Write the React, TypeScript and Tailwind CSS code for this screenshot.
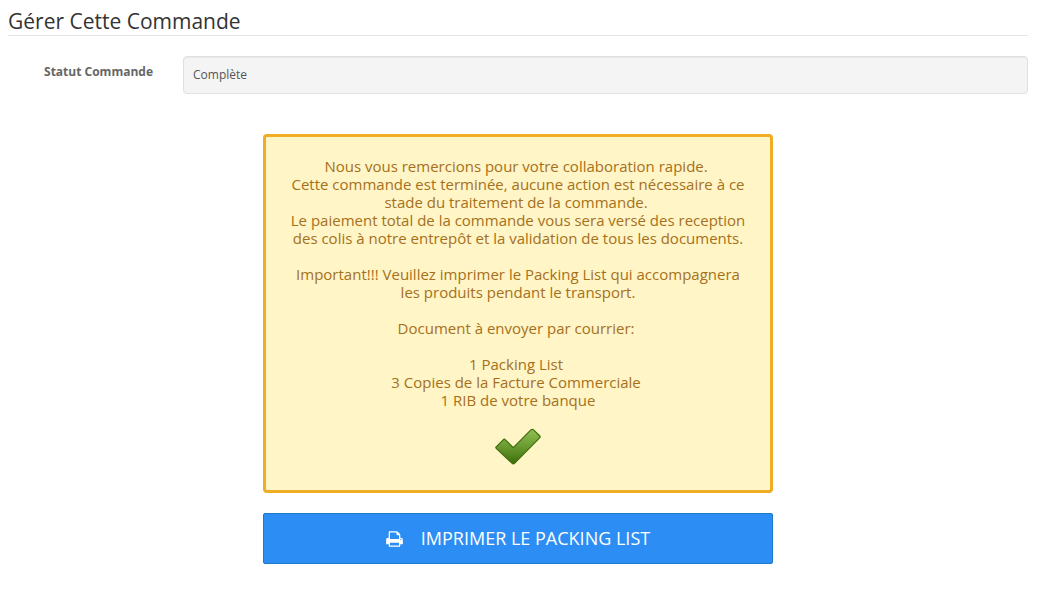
function PrintIcon() {
  return (
    <svg aria-hidden="true" viewBox="0 0 1664 1792" className="h-[18px] w-[17px] fill-current">
      <path d="M384 1536h896v-256h-896v256zM384 896h896v-384h-160q-40 0-68-28t-28-68v-160h-640v640zM1536 960q0-26-19-45t-45-19-45 19-19 45 19 45 45 19 45-19 19-45zM1664 960v416q0 13-9.500 22.500t-22.500 9.500h-224v160q0 40-28 68t-68 28h-960q-40 0-68-28t-28-68v-160h-224q-13 0-22.500-9.500t-9.500-22.500v-416q0-79 56.500-135.500t135.500-56.500h64v-544q0-40 28-68t68-28h672q40 0 88 20t76 48l152 152q28 28 48 76t20 88v256h64q79 0 135.500 56.500t56.500 135.500z" />
    </svg>
  );
}

function CheckMark() {
  return (
    <svg aria-hidden="true" viewBox="0 0 48 38" className="h-[38px] w-12">
      <defs>
        <linearGradient id="check-fill" x1="0" y1="0" x2="0" y2="1">
          <stop offset="0" stopColor="#8fc054" />
          <stop offset="0.5" stopColor="#699b30" />
          <stop offset="1" stopColor="#3f6d08" />
        </linearGradient>
      </defs>
      <path
        d="M2.200 18.800 9.400 11.600Q10.300 10.700 11.200 11.600L19.200 19.600 36.900 1.900Q38.300.7 39.600 1.900L45.600 7.800Q46.600 8.800 45.600 9.800L20.500 35.300Q19.300 36.500 18.100 35.300L2.200 20.400Q1.400 19.600 2.200 18.800Z"
        fill="url(#check-fill)"
        stroke="#3f6c0c"
        strokeWidth="1.200"
      />
    </svg>
  );
}

export default function App() {
  return (
    <main className="pt-2 pr-[14px] pl-2 pb-8 font-['Open_Sans',sans-serif]">
      <h1 className="border-b border-[#e5e5e5] pb-px text-[21px] leading-[26px] text-[#333]">
        Gérer Cette Commande
      </h1>

      <div className="mt-5 flex">
        <label
          htmlFor="statut"
          className="w-[145px] shrink-0 pt-[7px] text-right text-xs leading-[18px] font-bold text-[#666]"
        >
          Statut Commande
        </label>
        <input
          id="statut"
          type="text"
          readOnly
          defaultValue="Complète"
          className="ml-[30px] h-[38px] min-w-0 flex-1 rounded-[4px] border border-[#e0e0e0] bg-[#f4f4f4] px-[9px] pb-[2px] text-xs text-[#555] shadow-[inset_0_1px_1px_rgba(0,0,0,0.06)] outline-none"
        />
      </div>

      <div className="mx-auto mt-10 w-1/2">
        <section className="flex flex-col items-center rounded-[4px] border-3 border-[#efac25] bg-[#fff5c6] px-5 pt-5 pb-6 text-center text-[15px] leading-[18px] text-[#a6701b]">
          <p>
            Nous vous remercions pour votre collaboration rapide.&nbsp;
            <br />
            Cette commande est terminée, aucune action est nécessaire à ce stade du traitement de la
            commande.&nbsp;
            <br />
            Le paiement total de la commande vous sera versé des reception des colis à notre
            entrepôt et la validation de tous les documents.
          </p>
          <p className="mt-[18px]">
            Important!!! Veuillez imprimer le Packing List qui accompagnera les produits pendant le
            transport.
          </p>
          <p className="mt-[18px]">Document à envoyer par courrier:&nbsp;</p>
          <ul className="mt-[18px] mb-[19px]">
            <li>1 Packing List&nbsp;</li>
            <li>3 Copies de la Facture Commerciale&nbsp;</li>
            <li>1 RIB de votre banque</li>
          </ul>
          <CheckMark />
        </section>

        <button
          type="button"
          className="mt-5 flex h-[51px] w-full items-center justify-center gap-[18px] rounded-[2px] border border-[#1d7ac9] bg-[#2c8ef4] text-[18px] font-medium text-white"
        >
          <PrintIcon />
          IMPRIMER LE PACKING LIST
        </button>
      </div>
    </main>
  );
}
